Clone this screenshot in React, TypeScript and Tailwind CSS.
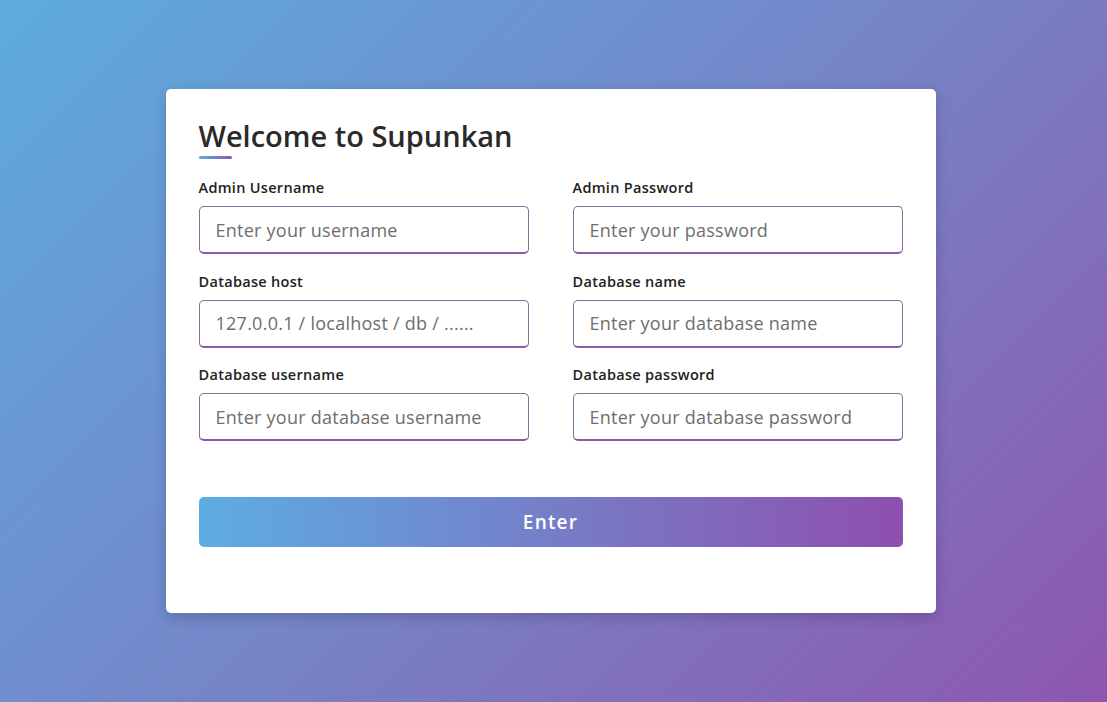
import React from "react";

const fields = [
  { label: "Admin Username", placeholder: "Enter your username", type: "text" },
  { label: "Admin Password", placeholder: "Enter your password", type: "password" },
  { label: "Database host", placeholder: "127.0.0.1 / localhost / db / ......", type: "text" },
  { label: "Database name", placeholder: "Enter your database name", type: "text" },
  { label: "Database username", placeholder: "Enter your database username", type: "text" },
  { label: "Database password", placeholder: "Enter your database password", type: "password" },
];

function Field({ label, placeholder, type }) {
  return (
    <div className="flex flex-col">
      <label className="text-[14.5px] leading-[20px] font-semibold tracking-[0.3px] text-[#222] mb-[8px]">{label}</label>
      <input
        type={type}
        placeholder={placeholder}
        className="h-[48px] w-full rounded-[5px] border border-[#8a6a9a] border-b-2 border-b-[#8a5aa6] bg-white px-[16px] text-[18px] tracking-[0.25px] text-[#333] placeholder:text-[#6e6e6e] outline-none"
      />
    </div>
  );
}

export default function App() {
  return (
    <div
      className="min-h-[702px] w-full flex items-start justify-center bg-[linear-gradient(135deg,#5dacde_0%,#7585c8_50%,#8e56b0_100%)] pt-[89px] pr-[6px]"
      style={{ fontFamily: '"Open Sans", "Liberation Sans", sans-serif' }}
    >
      <div className="w-[770px] h-[524px] rounded-[5px] bg-white shadow-[0_4px_14px_rgba(0,0,0,0.18)] px-[33px] pt-[27px]">
        <h1 className="text-[29px] leading-[40px] font-semibold text-[#2a2a2a]">Welcome to Supunkan</h1>
        <div className="w-[33px] h-[3px] rounded-full bg-[linear-gradient(90deg,#5dacde,#8e56b0)]" />
        <form className="mt-[19px]" onSubmit={(e) => e.preventDefault()}>
          <div className="grid grid-cols-2 gap-x-[44px] gap-y-[17.5px]">
            {fields.map((f) => (
              <Field key={f.label} {...f} />
            ))}
          </div>
          <button
            type="submit"
            className="mt-[56px] h-[50px] w-full rounded-[5px] bg-[linear-gradient(90deg,#5dade2,#8e4fae)] text-white text-[19px] font-semibold tracking-[1.2px]"
          >
            Enter
          </button>
        </form>
      </div>
    </div>
  );
}
